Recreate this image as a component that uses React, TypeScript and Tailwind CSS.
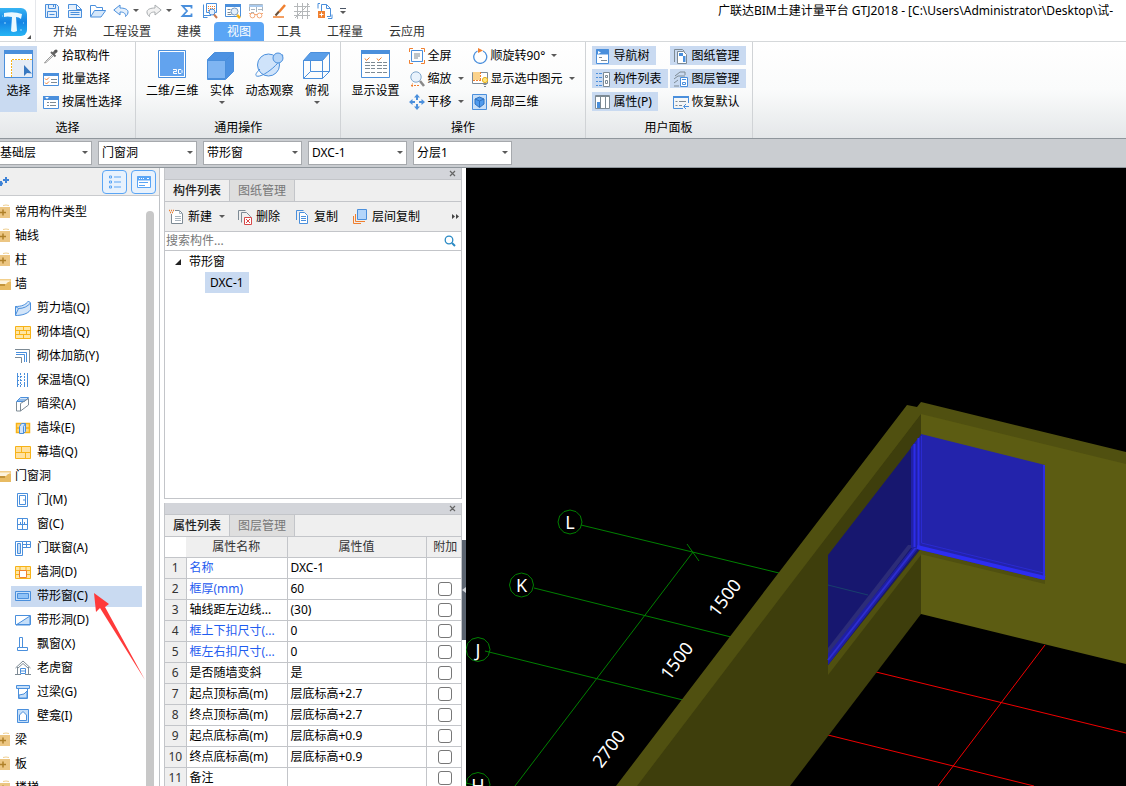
import type { ReactNode } from "react";

const BLUE = "#4a8fdc";
const GRAY = "#7d8a94";
const ORANGE = "#f08030";
const YELLOW = "#f7b318";

interface IconProps {
  children: ReactNode;
  size?: number;
}

function Icon({ children, size = 16 }: IconProps) {
  return (
    <svg
      width={size}
      height={size}
      viewBox={`0 0 ${size} ${size}`}
      fill="none"
      stroke={BLUE}
      className="shrink-0"
      aria-hidden="true"
    >
      {children}
    </svg>
  );
}

function Caret() {
  return (
    <svg width="6" height="4" viewBox="0 0 6 4" className="shrink-0" aria-hidden="true">
      <path d="M0 0h6L3 3z" fill="#5a5a5a" />
    </svg>
  );
}

// ---------- quick access bar ----------

const quickIcons: { label: string; icon: ReactNode; caret?: boolean }[] = [
  {
    label: "保存",
    icon: (
      <Icon>
        <path d="M1.500 1.500h11l2 2v11h-13z" fill="#e4effb" />
        <path d="M4.500 1.500v4h7v-4M9.500 2v2M3.500 14.500v-6h9v6M5.500 11.500h5" />
      </Icon>
    ),
  },
  {
    label: "新建",
    icon: (
      <Icon>
        <path d="M1.500 6V1.500h8l5 5v2M9.500 1.500v5h5M1.500 7.500v7h13v-7z" fill="#e4effb" />
        <path d="M3.500 9.500h9M3.500 11.500h9" />
      </Icon>
    ),
  },
  {
    label: "打开",
    icon: (
      <Icon>
        <path d="M.5 13.500v-11h5l1 2h6v3" />
        <path d="M.5 14l4-6.500h11.200L11 14z" fill="#d5e7fa" />
      </Icon>
    ),
  },
  {
    label: "撤销",
    caret: true,
    icon: (
      <Icon>
        <path d="M.8 7L7 2v3c4 0 7.500 1 8 3.500.3 2-1 4-2.500 5 .3-3-1.500-4.500-5.500-4.500v3z" fill="#e4effb" />
      </Icon>
    ),
  },
  {
    label: "重做",
    caret: true,
    icon: (
      <Icon>
        <path
          d="M15.200 7L9 2v3c-4 0-7.500 1-8 3.500-.3 2 1 4 2.500 5-.3-3 1.500-4.500 5.500-4.500v3z"
          fill="#f2f2f2"
          stroke="#a9adb0"
        />
      </Icon>
    ),
  },
  {
    label: "汇总计算",
    icon: (
      <Icon>
        <path d="M12.500 5.500V3h-9l4.500 5-4.500 5h9v-2.500" strokeWidth="1.800" />
      </Icon>
    ),
  },
  {
    label: "查看工程量",
    icon: (
      <Icon>
        <path d="M1.500 15V1.500M1 12.500h8M4.500 .5h10v9h-10zM1.500 14.500h4" />
        <path d="M6 3.500h7M6 5.500h7M6 7.500h4" stroke={ORANGE} strokeDasharray="1 1" />
        <circle cx="10" cy="9" r="3" fill="#e4effb" />
        <path d="M12 11.500l3 3.500" stroke="#c87850" strokeWidth="2" />
      </Icon>
    ),
  },
  {
    label: "查看报表",
    icon: (
      <Icon>
        <path d="M.5 1.500h15v12H.5z" />
        <path d="M0 2.500h16" strokeWidth="3" />
        <path d="M2.500 6.500h3M2.500 9.500h3M2.500 11.500h4" stroke={GRAY} />
        <circle cx="9.500" cy="8.500" r="3.500" fill="#e4effb" stroke="#7a9cc0" />
        <path d="M12 12l3 3" stroke={YELLOW} strokeWidth="2.500" />
      </Icon>
    ),
  },
  {
    label: "检查",
    icon: (
      <Icon>
        <path d="M1.500 8V1.500h13V8" stroke="#a8b4be" />
        <path d="M1 3h14" stroke="#a9c9ec" strokeWidth="2" />
        <path d="M3 6.500h4M10 6.500h4M8.500 4v5M3 9.500h3" stroke="#a8b4be" />
        <path d="M1 10.500h2M6 11.500h4M13 10.500h2" stroke="#f4a878" />
        <circle cx="4.500" cy="12.500" r="2.400" stroke="#f4a878" fill="#fff" />
        <circle cx="11.500" cy="12.500" r="2.400" stroke="#f4a878" fill="#fff" />
      </Icon>
    ),
  },
  {
    label: "标注",
    icon: (
      <Icon>
        <path d="M14 2L8 9" stroke={ORANGE} strokeWidth="2.500" />
        <path d="M8 8.500l-3.500 4" stroke="#6b5038" strokeWidth="2" />
        <path d="M2 14h11" stroke={ORANGE} strokeWidth="1.500" />
      </Icon>
    ),
  },
  {
    label: "轴网",
    icon: (
      <Icon>
        <path d="M3.500 0v16M8.500 0v16M13.500 0v16M0 3.500h16M0 8.500h16M0 12.500h16M1 15L15 1" stroke="#b5b8ba" />
      </Icon>
    ),
  },
  {
    label: "导入",
    icon: (
      <Icon>
        <path d="M4.500 8V1.500h5l4 4v8H10M9.500 1.500v4h4" />
        <path d="M3 .5h-2v5M11 15.500h4v-4" />
        <path d="M1 8h7v7H1z" fill={ORANGE} stroke="none" />
        <path d="M4.500 9.500v4M2.500 11.500h4" stroke="#fff" />
      </Icon>
    ),
  },
];

function Logo() {
  return (
    <svg width="31" height="36" viewBox="0 0 31 36" aria-label="GTJ2018" role="img">
      <defs>
        <linearGradient id="logo" x1="0" y1="0" x2="0" y2="1">
          <stop offset="0" stopColor="#37b4f3" />
          <stop offset="0.500" stopColor="#1584e4" />
          <stop offset="1" stopColor="#26b5f4" />
        </linearGradient>
      </defs>
      <rect x="-5" y="5" width="32" height="28" rx="6" fill="url(#logo)" />
      <path d="M4 10q10-2 18 1l-1 5q-2-2-5-2l1 14q-4 2-6 0l1-14q-5-1-8 0z" fill="#e9f8ff" />
      <path d="M4 20h2M20 27h2M2 13h1M23 20h1" stroke="#9cdcff" />
      <path d="M31 32v4h-4z" fill="#555" />
    </svg>
  );
}

const tabs = ["开始", "工程设置", "建模", "视图", "工具", "工程量", "云应用"];

function Header() {
  return (
    <header className="flex shrink-0 overflow-hidden bg-white">
      <button className="flex w-9 shrink-0 items-center border-r border-gray-200" aria-label="菜单">
        <Logo />
      </button>
      <div className="flex min-w-0 flex-1 flex-col">
        <div className="flex h-[22px]">
          <div className="flex flex-1 items-center gap-[7px] pl-2">
            {quickIcons.map((q) => (
              <button key={q.label} aria-label={q.label} className="flex items-center gap-1">
                {q.icon}
                {q.caret && <Caret />}
              </button>
            ))}
            <button aria-label="自定义" className="flex flex-col items-center gap-[2px]">
              <span className="h-px w-[6px] bg-gray-600" />
              <Caret />
            </button>
          </div>
          <h1 className="w-[408px] shrink-0 whitespace-nowrap leading-[22px] text-black">
            广联达BIM土建计量平台 GTJ2018 - [C:\Users\Administrator\Desktop\试-
          </h1>
        </div>
        <nav className="flex h-[19px] pl-1">
          {tabs.map((t) => (
            <button
              key={t}
              className={
                t === "视图"
                  ? "rounded-t-sm bg-[#5aa5f5] px-[13px] leading-[19px] text-white"
                  : "px-[13px] leading-[19px] text-[#333]"
              }
            >
              {t}
            </button>
          ))}
        </nav>
      </div>
    </header>
  );
}

// ---------- ribbon ----------

function Group({ title, children }: { title: string; children: ReactNode }) {
  return (
    <section className="flex flex-col border-r border-[#d0d3d6] pt-1">
      <div className="flex h-[72px]">{children}</div>
      <h2 className="text-center leading-5">{title}</h2>
    </section>
  );
}

function BigButton({ icon, label, caret }: { icon: ReactNode; label: string; caret?: boolean }) {
  return (
    <button className="flex h-[66px] flex-col items-center pt-[3px]">
      {icon}
      <span className="mt-[2px] leading-[17px]">{label}</span>
      {caret && (
        <span className="pt-[2px]">
          <Caret />
        </span>
      )}
    </button>
  );
}

function SmallButton({
  icon,
  label,
  caret,
}: {
  icon: ReactNode;
  label: string;
  caret?: boolean;
}) {
  return (
    <button className="flex h-[19px] items-center gap-[3px] whitespace-nowrap">
      {icon}
      <span>{label}</span>
      {caret && (
        <span className="pl-[3px]">
          <Caret />
        </span>
      )}
    </button>
  );
}

function PanelToggle({ icon, label, on }: { icon: ReactNode; label: string; on?: boolean }) {
  return (
    <button
      aria-pressed={!!on}
      className={
        on
          ? "flex h-[19px] items-center gap-[3px] whitespace-nowrap bg-[#c9daf1] pl-[3px] pr-[6px]"
          : "flex h-[19px] items-center gap-[3px] whitespace-nowrap pl-[3px] pr-[6px]"
      }
    >
      {icon}
      <span>{label}</span>
    </button>
  );
}

function Ribbon() {
  return (
    <div className="flex h-[98px] shrink-0 overflow-hidden border-b border-t border-b-[#8f969c] border-t-[#d5d8da] bg-linear-to-b from-white via-[#fafbfb] to-[#e4e7e9]">
      <Group title="选择">
        <button className="flex h-[66px] w-[37px] flex-col items-center bg-[#c9daf1] pt-[3px]">
          <Icon size={31}>
            <path d="M1.500 1.500h28v27h-28z" fill="#fff" />
            <path d="M1 3h29" strokeWidth="4" />
            <path d="M9 11h20v17H9z" fill="#e6edf6" stroke="none" />
            <path d="M8.500 28V10.500H29" stroke={YELLOW} strokeDasharray="2 1" />
            <path d="M21 16v11l3-3 5 .5z" fill="#3878c0" stroke="none" />
          </Icon>
          <span className="mt-[2px] leading-[17px]">选择</span>
        </button>
        <div className="flex w-[98px] flex-col gap-1 pl-[6px]">
          <SmallButton
            label="拾取构件"
            icon={
              <Icon>
                <path d="M9 7l-6.500 6.500-1 1.500 1.500-.5L10 8" stroke="#999" />
                <path d="M8 4l4.500 4.500" stroke="#666" strokeWidth="2" />
                <path d="M10 6l3-3" stroke="#666" strokeWidth="3" />
                <circle cx="13" cy="3" r="1.600" fill="#555" stroke="none" />
              </Icon>
            }
          />
          <SmallButton
            label="批量选择"
            icon={
              <Icon>
                <path d="M.5 2.500h15v12H.5z" fill="#fff" />
                <path d="M0 3.500h16" strokeWidth="3" />
                <path d="M8 8.500h6M8 11.500h6" stroke={GRAY} />
                <path d="M2 7.500l1.500 1.500L6 6.500M2 11.500L3.500 13 6 10.500" stroke={ORANGE} />
              </Icon>
            }
          />
          <SmallButton
            label="按属性选择"
            icon={
              <Icon>
                <path d="M.5 2.500h15v12H.5z" fill="#fff" />
                <path d="M0 4h16" strokeWidth="4" />
                <path d="M2 3h4L4 5z" fill="#fff" stroke="none" />
                <path d="M4 8.500h2M7 8.500h6M4 11.500h2M7 11.500h6" stroke={GRAY} />
              </Icon>
            }
          />
        </div>
      </Group>

      <Group title="通用操作">
        <div className="flex gap-2 pl-[10px] pr-2">
          <BigButton
            label="二维/三维"
            icon={
              <Icon size={31}>
                <path d="M1.500 1.500h27v27h-27z" fill="#fff" />
                <path d="M3 3h24v24H3z" fill="#62a3ee" stroke="none" />
                <path d="M16 20.500h3.500v2H16.500v2H20M21.500 20.500h2.500l1 1v2l-1 1h-2.500z" stroke="#fff" />
              </Icon>
            }
          />
          <BigButton
            label="实体"
            caret
            icon={
              <Icon size={31}>
                <path d="M1.500 10.500l7-7h19v19l-8 8h-18z" fill="#4d92e2" />
                <path d="M1.500 11.500h18v18h-18z" fill="#7fb5f2" />
                <path d="M19.500 11.500l8-8" />
              </Icon>
            }
          />
          <BigButton
            label="动态观察"
            icon={
              <Icon size={31}>
                <circle cx="14.500" cy="16" r="11" fill="#cfe3fa" />
                <path d="M6 20c-4 4-5 6-3.500 7 3 1.500 12-3.500 19-10.500 5-5 8-9.500 7-11" />
                <circle cx="24" cy="9" r="5" fill="#b5d5f8" />
              </Icon>
            }
          />
          <BigButton
            label="俯视"
            caret
            icon={
              <Icon size={31}>
                <path d="M2.500 11.500l7-8h19l-7 8z" fill="#5a9ee8" />
                <path d="M2.500 11.500h19v18h-19zM21.500 29.500l7-7v-19M9.500 11v11.500h19M9.500 22.500l-7 7" />
              </Icon>
            }
          />
        </div>
      </Group>

      <Group title="操作">
        <div className="flex pl-[10px]">
          <BigButton
            label="显示设置"
            icon={
              <Icon size={31}>
                <path d="M1.500 1.500h28v27h-28z" fill="#fff" />
                <path d="M1 3h29" strokeWidth="4" />
                <path d="M5 13.500h5M11 13.500h4M17 13.500h5M23 13.500h4M5 16.500h5M11 16.500h4M17 16.500h5M23 16.500h4M5 19.500h5M11 19.500h4M17 19.500h5M23 19.500h4M5 23.500h5M11 23.500h4M17 23.500h5M23 23.500h4" stroke={GRAY} />
                <path d="M5 9.500l1.500 2 3-3M17 9.500l1.500 2 3-3" stroke={ORANGE} />
              </Icon>
            }
          />
          <div className="flex w-[63px] flex-col gap-1 pl-[9px]">
            <SmallButton
              label="全屏"
              icon={
                <Icon>
                  <path d="M2.500 2.500h11v11h-11z" />
                  <path d="M5 6h6M5 8h6M5 10h4" stroke={GRAY} />
                  <path d="M.5 4V.5H4M12 .5h3.500V4M.5 12v3.500H4M12 15.500h3.500V12" stroke={ORANGE} />
                </Icon>
              }
            />
            <SmallButton
              label="缩放"
              caret
              icon={
                <Icon>
                  <circle cx="7" cy="6" r="5.200" fill="#e8f2fc" stroke="#7fa6cc" />
                  <path d="M11 10l4 5" stroke="#888" strokeWidth="2.500" />
                  <path d="M2 14.500h8M4 12.500l-2 2 2 1.500" stroke={ORANGE} strokeDasharray="2 1" />
                </Icon>
              }
            />
            <SmallButton
              label="平移"
              caret
              icon={
                <Icon>
                  <path
                    d="M8 0l3 3.500H9V6H7V3.500H5zM8 16l3-3.500H9V10H7v2.500H5zM0 8l3.500-3v2H6v2H3.500v2zM16 8l-3.500-3v2H10v2h2.500v2z"
                    fill={BLUE}
                    stroke="none"
                  />
                </Icon>
              }
            />
          </div>
          <div className="flex w-[122px] flex-col gap-1 pl-[9px]">
            <SmallButton
              label="顺旋转90°"
              caret
              icon={
                <Icon>
                  <path d="M5.500 3A6.500 6.500 0 1 0 11 3" strokeWidth="1.300" />
                  <path d="M6 0l5 2.500L6 5z" fill={ORANGE} stroke="none" />
                </Icon>
              }
            />
            <SmallButton
              label="显示选中图元"
              caret
              icon={
                <Icon>
                  <path d="M.5 1.500h15v11H.5z" stroke={GRAY} fill="#fff" />
                  <path d="M1 1h7v8H1z" fill="#fbd28a" stroke="none" />
                  <path d="M8.500 1v8M1 9.500h8" stroke={ORANGE} strokeDasharray="2 1" />
                  <circle cx="13" cy="9" r="2.600" fill="#ffe680" stroke="#e7b018" />
                  <path d="M11.500 13.500h3M12 15.500h2" stroke={GRAY} />
                </Icon>
              }
            />
            <SmallButton
              label="局部三维"
              icon={
                <Icon>
                  <path d="M.5 .5h14v15H.5z" fill="#c9e0f8" />
                  <path d="M7.500 3l4.500 2v5L7.500 13.500 3 10V5z" fill="#4f9bee" stroke="#2f72c0" />
                  <path d="M3 5l4.500 2L12 5M7.500 7v6" stroke="#2f72c0" />
                </Icon>
              }
            />
          </div>
        </div>
      </Group>

      <Group title="用户面板">
        <div className="flex gap-[2px] px-[6px]">
          <div className="flex flex-col items-start gap-1">
            <PanelToggle
              on
              label="导航树"
              icon={
                <Icon>
                  <path d="M1.500 1.500h12v14h-12z" fill="#fff" />
                  <path d="M1 4h13" strokeWidth="5" />
                  <path d="M3 3l3 1.500L3 6z" fill="#fff" stroke="none" />
                  <path d="M4 9.500h3M6 12.500h6" stroke={GRAY} />
                </Icon>
              }
            />
            <PanelToggle
              on
              label="构件列表"
              icon={
                <Icon>
                  <path d="M1 2.500h2M4 2.500h3M1 6.500h2M4 6.500h3M1 10.500h2M4 10.500h3M1 14.500h2M4 14.500h3" />
                  <path d="M8.500 1.500h6v14h-6z" stroke={GRAY} fill="#fff" />
                  <path d="M10.500 4.500h2v2h-2zM10.500 9.500h2v3h-2z" stroke={GRAY} />
                </Icon>
              }
            />
            <PanelToggle
              on
              label="属性(P)"
              icon={
                <Icon>
                  <path d="M.5 1.500h14v13H.5z" stroke={GRAY} fill="#fff" />
                  <path d="M0 2.500h15M5.500 2v12M10.500 2v12" stroke={GRAY} />
                  <path d="M2 8h3v6H2z" fill={BLUE} stroke="none" />
                </Icon>
              }
            />
          </div>
          <div className="flex flex-col items-start gap-1">
            <PanelToggle
              on
              label="图纸管理"
              icon={
                <Icon>
                  <path d="M1.500 14V1.500h8l2 2" stroke={GRAY} />
                  <path d="M4.500 15.500v-12h6l3 3v9z" fill="#fff" stroke={GRAY} />
                  <path d="M6 5h4v3h2.500v6H10V8H6z" fill={BLUE} stroke="none" />
                </Icon>
              }
            />
            <PanelToggle
              on
              label="图层管理"
              icon={
                <Icon>
                  <path d="M2 5l5-4h5v3M1 8l4-3h7M1 12l4-3M1 15h5" stroke={GRAY} />
                  <path d="M7.500 6.500h7v9h-7z" fill="#fff" />
                  <path d="M9 8.500h4M9.500 11.500h3v2h-3z" />
                </Icon>
              }
            />
            <PanelToggle
              label="恢复默认"
              icon={
                <Icon>
                  <path d="M10 14.500H.5v-12h15V9" />
                  <path d="M0 3h16" strokeWidth="2" />
                  <path d="M2.500 7.500h2M6 7.500h7M2.500 11.500h2M6 11.500h3" stroke={GRAY} />
                  <path d="M16 12.500h-5M13 10l-2.500 2.500L13 15" />
                </Icon>
              }
            />
          </div>
        </div>
      </Group>
    </div>
  );
}

// ---------- floor / component selectors ----------

const selectors = [
  { label: "构件类别", value: "门窗洞" },
  { label: "构件类型", value: "带形窗" },
  { label: "构件", value: "DXC-1" },
  { label: "分层", value: "分层1" },
];

function Arrow() {
  return (
    <span className="pointer-events-none absolute right-1 top-[10px]">
      <Caret />
    </span>
  );
}

function SelectorBar() {
  return (
    <div className="flex h-[29px] shrink-0 items-center gap-[6px] border-b border-[#8f969c] bg-[#cacdd1]">
      <div className="relative w-[92px]">
        <select
          aria-label="楼层"
          className="block h-6 w-full appearance-none border border-l-0 border-[#a6a9ad] bg-white"
        >
          <option>基础层</option>
        </select>
        <Arrow />
      </div>
      {selectors.map((s) => (
        <div key={s.label} className="relative w-[99px]">
          <select
            aria-label={s.label}
            className="block h-6 w-full appearance-none border border-[#a6a9ad] bg-white pl-[3px]"
          >
            <option>{s.value}</option>
          </select>
          <Arrow />
        </div>
      ))}
    </div>
  );
}

// ---------- navigation tree ----------

function Folder({ open }: { open?: boolean }) {
  return (
    <svg width="11" height="16" viewBox="0 0 11 16" aria-hidden="true">
      {open ? (
        <>
          <path d="M0 3h11v11H0z" fill="#f3d08c" />
          <path d="M0 4.500h10L7 8H0z" fill="#fdf3dc" />
          <path d="M0 8h6l2-2h3v8H0z" fill="#e8bb62" />
          <path d="M0 9h5" stroke="#a87b22" strokeWidth="1.200" />
        </>
      ) : (
        <>
          <path d="M3 1.500q3-1 6 0" stroke="#f0cf90" fill="none" />
          <path d="M0 3h10v11H0z" fill="#ecc683" />
          <path d="M0 8.500h6M3 5.500v6" stroke="#ae8029" strokeWidth="1.500" />
        </>
      )}
    </svg>
  );
}

interface TreeNode {
  label: string;
  open?: boolean;
  items?: { label: string; icon: ReactNode; active?: boolean }[];
}

const tree: TreeNode[] = [
  { label: "常用构件类型" },
  { label: "轴线" },
  { label: "柱" },
  {
    label: "墙",
    open: true,
    items: [
      {
        label: "剪力墙(Q)",
        icon: (
          <Icon>
            <path d="M.5 6.500c6 0 10-1.500 13-5.500l2 2v7c-3 4-9 5.500-15 5.500z" fill="#d3e5f9" />
            <path d="M.5 6.500l3 2c5 0 9-2 12-5.500M3.500 8.500L.5 15" />
          </Icon>
        ),
      },
      {
        label: "砌体墙(Q)",
        icon: (
          <Icon>
            <path d="M.5 2.500h15v12H.5z" fill="#ffe7a6" stroke={YELLOW} />
            <path d="M0 6.500h16M0 10.500h16M8.500 2v4M4.500 6v4M11.500 6v4M8.500 10v4" stroke={YELLOW} />
          </Icon>
        ),
      },
      {
        label: "砌体加筋(Y)",
        icon: (
          <Icon>
            <path d="M0 1.500h14.500V15M0 9.500h6.500V15" stroke={GRAY} />
            <path d="M1 4.500h10.500V14M1 6.500h8.500V14" />
          </Icon>
        ),
      },
      {
        label: "保温墙(Q)",
        icon: (
          <Icon>
            <path d="M2.500 1v14M12.500 1v14" />
            <path d="M5.500 1v14M9.500 1v14" strokeDasharray="2 1" />
            <path d="M3 4.500h9M3 8.500h9M3 12.500h9" strokeDasharray="1 2" />
          </Icon>
        ),
      },
      {
        label: "暗梁(A)",
        icon: (
          <Icon>
            <path d="M1.500 5.500l4-4h8l-4 4zM3 4h8" fill="#d3e5f9" />
            <path d="M1.500 6v9h4V7.500l8-5V9l-8 6" stroke={GRAY} />
          </Icon>
        ),
      },
      {
        label: "墙垛(E)",
        icon: (
          <Icon>
            <path d="M1.500 3.500h13v9h-13zM1 8h14" fill="#ffd980" stroke={YELLOW} strokeWidth="1.500" />
            <path d="M4.500 6.500l2-3h4v8l-2 2h-4zM8.500 6.500v7M8.500 6.500l2-3" fill="#d3e5f9" />
          </Icon>
        ),
      },
      {
        label: "幕墙(Q)",
        icon: (
          <Icon>
            <path d="M.5 2.500h15v12H.5z" fill="#ffe1a0" stroke={YELLOW} />
            <path d="M0 8.500h16M6.500 2v6M10.500 8v6" stroke={YELLOW} />
          </Icon>
        ),
      },
    ],
  },
  {
    label: "门窗洞",
    open: true,
    items: [
      {
        label: "门(M)",
        icon: (
          <Icon>
            <path d="M2.500 1.500h10v13h-10z" />
            <path d="M4.500 3.500h6v9h-6z" />
            <path d="M9 7v2" />
          </Icon>
        ),
      },
      {
        label: "窗(C)",
        icon: (
          <Icon>
            <path d="M2.500 2.500h10v11h-10zM2 8.500h11M7.500 2v12" />
            <path d="M5.500 6v2M9.500 6v2" />
          </Icon>
        ),
      },
      {
        label: "门联窗(A)",
        icon: (
          <Icon>
            <path d="M.5 1.500h7v14h-7z" />
            <path d="M2.500 3.500h3v10h-3z" fill="#c6dff9" />
            <path d="M7.500 1.500h8v6h-8M11.500 1.500v6M8 4.500h7.500" />
          </Icon>
        ),
      },
      {
        label: "墙洞(D)",
        icon: (
          <Icon>
            <path d="M.5 2.500h15v12H.5zM0 6.500h16M5 2v4M11 2v4M0 10.500h4M12 10.500h4" fill="#ffe7a6" stroke={YELLOW} />
            <path d="M4.500 6.500h7v7h-7z" fill="#fff" stroke={ORANGE} />
          </Icon>
        ),
      },
      {
        label: "带形窗(C)",
        active: true,
        icon: (
          <Icon>
            <path d="M.5 3.500h15v9H.5z" fill="#c6dff9" />
            <path d="M2.500 5.500h11v5h-11z" fill="#8fc2f7" />
          </Icon>
        ),
      },
      {
        label: "带形洞(D)",
        icon: (
          <Icon>
            <path d="M1 13L15 4v9z" fill="#c6dff9" />
            <path d="M.5 3.500h15v9H.5z" />
          </Icon>
        ),
      },
      {
        label: "飘窗(X)",
        icon: (
          <Icon>
            <path d="M4.500 1.500v10h8v3h-10v-3h2M4.500 1.500h3v10" fill="#fff" />
          </Icon>
        ),
      },
      {
        label: "老虎窗",
        icon: (
          <Icon>
            <path d="M.5 8L8 1l7.500 7M2.500 7v7.500M13.500 7v7.500M0 14.500h6M10 14.500h6M3 8l5-4.500L13 8" stroke={GRAY} />
            <path d="M5.500 8.500h5v5h-5zM5.500 11h5" />
          </Icon>
        ),
      },
      {
        label: "过梁(G)",
        icon: (
          <Icon>
            <path d="M1.500 1.500h13v3h-13z" fill="#c6dff9" />
            <path d="M3.500 4.500v10h9v-10" />
            <path d="M4 14v-3l5-1 3-3v7z" fill="#c6dff9" />
          </Icon>
        ),
      },
      {
        label: "壁龛(I)",
        icon: (
          <Icon>
            <path d="M2.500 1.500h11v13h-11z" fill="#c6dff9" />
            <path d="M4.500 12.500V7L8 3.500 11.500 7v5.500z" fill="#fff" />
          </Icon>
        ),
      },
    ],
  },
  { label: "梁" },
  { label: "板" },
  { label: "楼梯" },
];

function NavPanel() {
  return (
    <aside className="relative flex w-40 shrink-0 flex-col border-r border-[#bfc2c6] bg-white">
      <div className="flex h-7 shrink-0 items-center justify-end gap-1 border-b border-[#c9cbce] bg-[#efefef] pr-[3px]">
        <button aria-label="展开" className="mr-auto">
          <svg width="10" height="14" viewBox="0 0 10 14" aria-hidden="true">
            <path d="M3 5h6M6 2v6M0 8.500h3M1 6v5" stroke="#3f83d6" strokeWidth="2" fill="none" />
          </svg>
        </button>
        <button
          aria-label="列表视图"
          className="flex h-6 w-[25px] items-center justify-center rounded border border-[#5aa5f5] bg-[#e8f2fd]"
        >
          <Icon>
            <path d="M2.500 2h2v2h-2zM2.500 7h2v2h-2zM2.500 12h2v2h-2zM7 3h7M7 8h7M7 13h7" stroke="#5aa5f5" />
          </Icon>
        </button>
        <button
          aria-label="面板视图"
          className="flex h-6 w-[25px] items-center justify-center rounded border border-[#5aa5f5] bg-[#e8f2fd]"
        >
          <Icon>
            <path d="M1.500 2.500h13v11h-13z" fill="#fff" stroke="#5aa5f5" />
            <path d="M1 4.500h14" stroke="#5aa5f5" strokeWidth="4" />
            <path d="M3 4.500h1M5 4.500h1M7 4.500h1M11 4.500h2" stroke="#fff" />
            <path d="M3 8.500h9M3 11.500h6" stroke="#5aa5f5" />
          </Icon>
        </button>
      </div>
      <div className="flex min-h-0 flex-1 pt-1">
        <ul className="flex-1 overflow-hidden">
          {tree.map((node) => (
            <li key={node.label}>
              <button className="flex h-6 items-center gap-1">
                <Folder open={node.open} />
                {node.label}
              </button>
              {node.items && (
                <ul>
                  {node.items.map((item) => (
                    <li key={item.label} className="flex h-6 items-center pl-[11px]">
                      <button
                        className={
                          item.active
                            ? "flex h-[21px] flex-1 items-center gap-[6px] bg-[#c9daf1] pl-1"
                            : "flex h-[21px] flex-1 items-center gap-[6px] pl-1"
                        }
                      >
                        {item.icon}
                        {item.label}
                      </button>
                    </li>
                  ))}
                </ul>
              )}
            </li>
          ))}
        </ul>
        <div className="w-[17px] pl-1 pt-[11px]">
          <div className="h-full w-2 rounded-t-full bg-[#c8c8c8]" />
        </div>
      </div>
      <svg
        width="52"
        height="90"
        viewBox="0 0 52 90"
        className="pointer-events-none absolute left-[94px] top-[424px]"
        aria-hidden="true"
      >
        <path d="M0 1l15 11-4 3 40 73L6 16l-4 4z" fill="#ff3a3a" />
      </svg>
    </aside>
  );
}

// ---------- docked panels ----------

function PanelHead({ active, other }: { active: string; other: string }) {
  return (
    <>
      <div className="flex h-3 shrink-0 items-center justify-end border-b border-[#c3c5c9] bg-[#d3d5da] pr-[5px]">
        <button aria-label="关闭">
          <svg width="7" height="7" viewBox="0 0 7 7" aria-hidden="true">
            <path d="M1 1l5 5M6 1L1 6" stroke="#666" strokeWidth="1.200" />
          </svg>
        </button>
      </div>
      <div className="flex h-[22px] shrink-0 border-b border-[#c3c5c9] bg-[#efefef]">
        <button className="px-2 font-medium text-[#222]">{active}</button>
        <button className="border-x border-[#c3c5c9] bg-[#dedede] px-2 text-[#777]">{other}</button>
      </div>
    </>
  );
}

function ComponentPanel() {
  return (
    <section className="flex h-[331px] shrink-0 flex-col border border-t-0 border-[#c3c5c9] bg-white">
      <PanelHead active="构件列表" other="图纸管理" />
      <div className="flex h-[30px] shrink-0 items-center border-b border-[#c3c5c9] bg-[#efefef] pl-1 pr-px">
        <button className="flex items-center gap-[3px]">
          <Icon>
            <path d="M2.500 5v9.500h11V4.500l-3-3H6" stroke={GRAY} fill="#fff" />
            <path d="M10.500 1.500v3h3M6 7.500h6M6 9.500h6M6 11.500h6" stroke="#a8b4be" />
            <path d="M0 1.500h5M1 3.500h4" stroke={ORANGE} strokeDasharray="1 1" strokeWidth="1.500" />
          </Icon>
          新建
          <span className="pl-1">
            <Caret />
          </span>
        </button>
        <button className="ml-3 flex items-center gap-[3px]">
          <Icon>
            <path d="M1.500 11V1.500h7" stroke={GRAY} />
            <path d="M4.500 13.500v-10h5l4 4v3" stroke={GRAY} />
            <path d="M7.500 8.500h7v7h-7z" stroke="#d84848" fill="#fff" />
            <path d="M9 10l4 4M13 10l-4 4" stroke="#d84848" />
          </Icon>
          删除
        </button>
        <button className="ml-[15px] flex items-center gap-[3px]">
          <Icon>
            <path d="M1.500 11V1.500h7" />
            <path d="M4.500 3.500h5l3 3v8h-8z" fill="#fff" />
            <path d="M6 7.500h5M6 9.500h5M6 11.500h5" />
          </Icon>
          复制
        </button>
        <button className="ml-[15px] flex items-center gap-[3px]">
          <Icon>
            <path d="M.5 7v7.500H8" stroke={ORANGE} />
            <path d="M2.500 5v7.500H12" stroke={ORANGE} />
            <path d="M4.500 .5h9v10h-9z" fill="#b3d5fa" />
          </Icon>
          层间复制
        </button>
        <button aria-label="更多" className="ml-auto">
          <svg width="8" height="7" viewBox="0 0 8 7" aria-hidden="true">
            <path d="M0 1l3 2.500L0 6zM4 1l3 2.500L4 6z" fill="#444" />
          </svg>
        </button>
      </div>
      <label className="flex h-[19px] shrink-0 items-center border-b border-[#c3c5c9] pr-[5px]">
        <input
          aria-label="搜索构件"
          placeholder="搜索构件..."
          className="min-w-0 flex-1 pl-px outline-none placeholder:text-[#777]"
        />
        <svg width="12" height="12" viewBox="0 0 12 12" fill="none" stroke="#2a8ac4" aria-hidden="true">
          <circle cx="5" cy="5" r="3.800" strokeWidth="1.300" />
          <path d="M8 8l3 3" strokeWidth="2" />
        </svg>
      </label>
      <div className="flex flex-col items-start">
        <button className="flex h-[21px] items-center gap-2 pl-[10px]">
          <svg width="6" height="6" viewBox="0 0 6 6" aria-hidden="true">
            <path d="M6 0v6H0z" fill="#222" />
          </svg>
          带形窗
        </button>
        <button className="ml-10 h-[21px] bg-[#c9daf1] px-[5px]">DXC-1</button>
      </div>
    </section>
  );
}

interface Property {
  name: string;
  value: string;
  blue?: boolean;
}

const properties: Property[] = [
  { name: "名称", value: "DXC-1", blue: true },
  { name: "框厚(mm)", value: "60", blue: true },
  { name: "轴线距左边线...", value: "(30)" },
  { name: "框上下扣尺寸(...", value: "0", blue: true },
  { name: "框左右扣尺寸(...", value: "0", blue: true },
  { name: "是否随墙变斜", value: "是" },
  { name: "起点顶标高(m)", value: "层底标高+2.7" },
  { name: "终点顶标高(m)", value: "层底标高+2.7" },
  { name: "起点底标高(m)", value: "层底标高+0.9" },
  { name: "终点底标高(m)", value: "层底标高+0.9" },
  { name: "备注", value: "" },
];

function PropertyPanel() {
  return (
    <section className="flex min-h-0 flex-1 flex-col overflow-hidden border-x border-[#c3c5c9] bg-white">
      <PanelHead active="属性列表" other="图层管理" />
      <table className="w-full table-fixed border-collapse">
        <thead>
          <tr className="h-5 border-b border-[#c3c5c9] bg-[#efefef] text-[#333]">
            <th className="w-[21px] bg-white" aria-label="序号"></th>
            <th className="w-[101px] border-r border-[#c3c5c9] font-normal">属性名称</th>
            <th className="border-r border-[#c3c5c9] font-normal">属性值</th>
            <th className="w-[35px] whitespace-nowrap pl-[3px] font-normal">附加</th>
          </tr>
        </thead>
        <tbody>
          {properties.map((p, index) => (
            <tr key={p.name} className="h-[21px] border-b border-[#c3c5c9]">
              <td className="border-r border-[#c3c5c9] bg-[#efefef] text-center text-[#333]">{index + 1}</td>
              <td
                className={
                  p.blue
                    ? "overflow-hidden whitespace-nowrap border-r border-[#c3c5c9] pl-[3px] text-[#1f5cf0]"
                    : "overflow-hidden whitespace-nowrap border-r border-[#c3c5c9] pl-[3px]"
                }
              >
                {p.name}
              </td>
              <td className="border-r border-[#c3c5c9] pl-[3px]">{p.value}</td>
              <td className="pl-[2px]">
                {index > 0 && (
                  <input
                    type="checkbox"
                    aria-label={`附加 ${p.name}`}
                    className="mx-auto block h-[14px] w-[14px] appearance-none rounded-[3px] border border-[#777] bg-white"
                  />
                )}
              </td>
            </tr>
          ))}
        </tbody>
      </table>
    </section>
  );
}

// ---------- 3D view ----------

const axes = [
  { name: "L", x: 570, y: 522 },
  { name: "K", x: 521.5, y: 585 },
  { name: "J", x: 478, y: 649.5 },
  { name: "H", x: 478, y: 784.5 },
];

const dims = [
  { text: "1500", x: 725, y: 598 },
  { text: "1500", x: 677, y: 661 },
  { text: "2700", x: 609, y: 749 },
];

function ring(cx: number, cy: number, r: number) {
  return Array.from({ length: 12 }, (_, i) => {
    const a = (i * Math.PI) / 6;
    return `${(cx + r * Math.cos(a)).toFixed(1)},${(cy + r * Math.sin(a)).toFixed(1)}`;
  }).join(" ");
}

function Scene() {
  return (
    <main className="min-w-0 flex-1 overflow-hidden bg-black">
      <svg
        viewBox="466 168 660 618"
        preserveAspectRatio="xMinYMin slice"
        className="block h-full w-full"
        role="img"
        aria-label="三维视图"
      >
        <g stroke="#008000" fill="none">
          <path d="M581 525L779 573M534 588L731 637M485 651L683 700M466 783L486 788" />
          <path d="M693 552L515 786M687 544L699 561" />
          {axes.map((a) => (
            <polygon key={a.name} points={ring(a.x, a.y, 12)} />
          ))}
        </g>
        <g fill="#fff" fontSize="18" textAnchor="middle">
          {axes.map((a) => (
            <text key={a.name} x={a.x} y={a.y + 7}>
              {a.name}
            </text>
          ))}
          {dims.map((d) => (
            <text key={d.y} x={d.x} y={d.y + 6} transform={`rotate(-53 ${d.x} ${d.y})`}>
              {d.text}
            </text>
          ))}
        </g>

        <path d="M876 672L1126 733M828 735L1034 786M1045 645L938 786" stroke="#f00000" />

        {/* walls */}
        <path d="M907 405l10 2 4-5 205 50v13l-205-50-283 371h-22L780 571z" fill="#505010" />
        <path d="M921 414l205 50v200l-205-50z" fill="#5c5c12" />
        <path d="M921 414v200L790 786H637L780 598z" fill="#3e3e0c" />

        {/* left pane */}
        <path d="M828 665v10l93-120v-6z" fill="#505010" />
        <path d="M828 555l93-120v113l-93 117z" fill="#17176f" />
        <path d="M828 648l80-103h5L828 657z" fill="#2c2c78" />
        <path d="M828 585l40 10" stroke="#17406c" />
        <path d="M828 654l89-112v8l-89 115z" fill="#1f1fa4" />
        <path d="M828 660l89-114" stroke="#2d2dd0" strokeWidth="2" />
        <path d="M911 447l10-12v113h-10z" fill="#2020a8" />

        {/* right pane */}
        <path d="M920 549l125 31v4l-125-30z" fill="#505010" />
        <path d="M921 434l124 31v115l-128-31z" fill="#2323ab" />
        <path d="M914.500 444v103M918.500 438v110" stroke="#2d2de8" strokeWidth="2" />
        <path d="M1044 465v114" stroke="#2d2de0" strokeWidth="2" />
        <path d="M917 547l128 31" stroke="#2d2df0" strokeWidth="4" />
        <path d="M921.500 436v107l122 30" stroke="#2a2ad0" fill="none" />
      </svg>
    </main>
  );
}

export default function App() {
  return (
    <div className="flex h-screen flex-col overflow-hidden bg-white font-[family-name:'Noto_Sans','Noto_Sans_CJK_SC',sans-serif] text-xs text-black">
      <Header />
      <Ribbon />
      <SelectorBar />
      <div className="flex min-h-0 flex-1">
        <NavPanel />
        <div className="ml-1 flex w-[298px] shrink-0 flex-col gap-1">
          <ComponentPanel />
          <PropertyPanel />
        </div>
        <div className="w-1 shrink-0 pt-[372px]">
          <button aria-label="收起面板" className="flex h-[100px] w-1 items-center bg-[#5b6470]">
            <svg width="4" height="6" viewBox="0 0 4 6" aria-hidden="true">
              <path d="M4 0v6L0 3z" fill="#cfd3d8" />
            </svg>
          </button>
        </div>
        <Scene />
      </div>
    </div>
  );
}
